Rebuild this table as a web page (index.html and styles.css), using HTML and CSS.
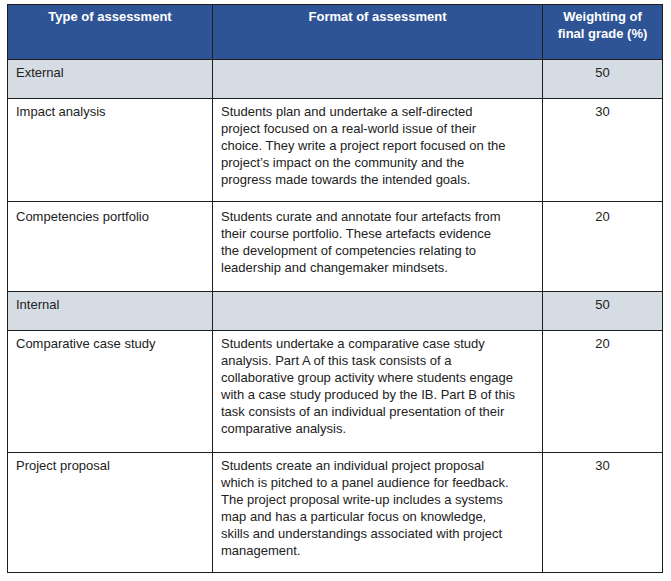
FILE: index.html
```html
<!DOCTYPE html>
<html lang="en">
<head>
<meta charset="utf-8">
<title>Assessment outline</title>
<link rel="stylesheet" href="styles.css">
</head>
<body>
<table class="assess">
  <colgroup>
    <col class="c-type">
    <col class="c-format">
    <col class="c-weight">
  </colgroup>
  <thead>
    <tr class="head">
      <th>Type of assessment</th>
      <th>Format of assessment</th>
      <th>Weighting of<br>final grade (%)</th>
    </tr>
  </thead>
  <tbody>
    <tr class="group">
      <td>External</td>
      <td></td>
      <td class="num">50</td>
    </tr>
    <tr>
      <td>Impact analysis</td>
      <td>Students plan and undertake a self-directed<br>project focused on a real-world issue of their<br>choice. They write a project report focused on the<br>project’s impact on the community and the<br>progress made towards the intended goals.</td>
      <td class="num">30</td>
    </tr>
    <tr class="roomy">
      <td>Competencies portfolio</td>
      <td>Students curate and annotate four artefacts from<br>their course portfolio. These artefacts evidence<br>the development of competencies relating to<br>leadership and changemaker mindsets.</td>
      <td class="num">20</td>
    </tr>
    <tr class="group">
      <td>Internal</td>
      <td></td>
      <td class="num">50</td>
    </tr>
    <tr class="long">
      <td>Comparative case study</td>
      <td>Students undertake a comparative case study<br>analysis. Part A of this task consists of a<br>collaborative group activity where students engage<br>with a case study produced by the IB. Part B of this<br>task consists of an individual presentation of their<br>comparative analysis.</td>
      <td class="num">20</td>
    </tr>
    <tr>
      <td>Project proposal</td>
      <td>Students create an individual project proposal<br>which is pitched to a panel audience for feedback.<br>The project proposal write-up includes a systems<br>map and has a particular focus on knowledge,<br>skills and understandings associated with project<br>management.</td>
      <td class="num">30</td>
    </tr>
  </tbody>
</table>
</body>
</html>
```
FILE: styles.css
```css
html, body {
  background: #ffffff;
}
body {
  margin: 4px 0 0 7px;
  font-family: "Liberation Sans", Arial, sans-serif;
  font-size: 13px;
  line-height: 17px;
  color: #222222;
}
.assess {
  border-collapse: collapse;
  table-layout: fixed;
  width: 655px;
  border: 1px solid #4a4a4a;
}
.c-type { width: 205px; }
.c-format { width: 330px; }
.c-weight { width: 120px; }
.assess th,
.assess td {
  border: 1px solid #1e1e1e;
  vertical-align: top;
  text-align: left;
  padding: 4px 8px 13px 8px;
}
.head th {
  background: #2f5496;
  color: #ffffff;
  font-weight: bold;
  text-align: center;
  height: 38px;
  padding-top: 3px;
}
.group td {
  background: #d6dce4;
  height: 17px;
  padding-bottom: 17px;
}
.roomy td {
  padding-top: 6px;
  padding-bottom: 15px;
}
.long td {
  padding-bottom: 15px;
}
.assess td.num {
  text-align: center;
}
```
